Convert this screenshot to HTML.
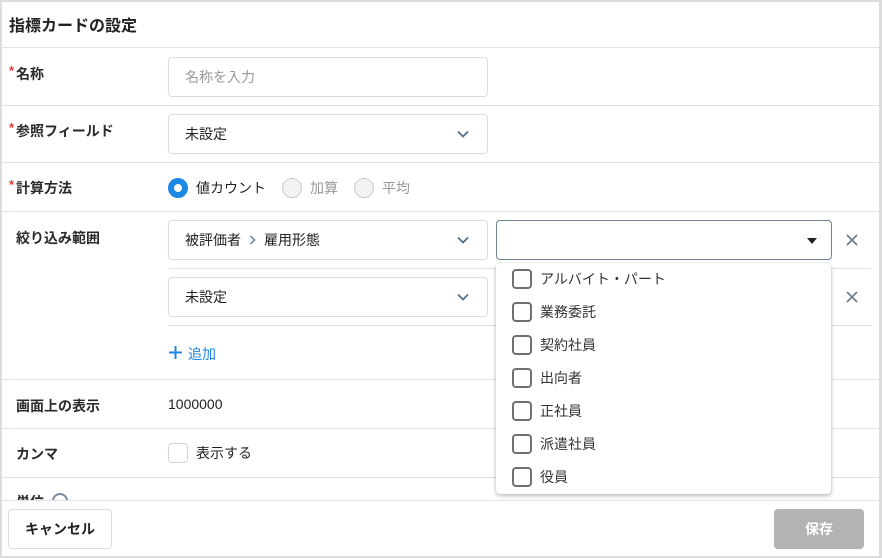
<!DOCTYPE html>
<html><head><meta charset="utf-8"><style>
*{box-sizing:border-box;margin:0;padding:0}
body{width:882px;height:558px;overflow:hidden;background:#fff;font-family:"Liberation Sans","Noto Sans CJK JP",sans-serif;color:#222;position:relative}
.frame{position:absolute;left:0;top:0;width:882px;height:558px;border:2px solid #dcdcdc;border-right-width:3px}
.a{position:absolute}
.line{position:absolute;left:2px;right:3px;height:1px;background:#dde3ea}
.lbl{position:absolute;left:16px;font-size:14px;font-weight:bold;color:#2a2a2a}
.lbl .s{color:#e53935;position:absolute;left:-7px;top:-1px;font-size:13px}
.box{position:absolute;border:1px solid #d8dee6;border-radius:4px;background:#fff;font-size:14px;color:#222;padding-left:16px;display:flex;align-items:center}
.chev{position:absolute;right:18px;top:50%;margin-top:-4px}
.cb{width:20px;height:20px;border:2px solid #707070;border-radius:4px;position:absolute;left:16px}
.item{position:absolute;left:0;right:0;height:33px;font-size:14px;color:#333}
.item span{position:absolute;left:44px;top:6px}
</style></head><body>
<div class="frame"></div>
<div class="a" style="left:9px;top:12px;font-size:16px;font-weight:bold;color:#222">指標カードの設定</div>
<div class="line" style="top:47px"></div>

<div class="lbl" style="top:64px"><span class="s">*</span>名称</div>
<div class="box" style="left:168px;top:57px;width:320px;height:40px;color:#999">名称を入力</div>
<div class="line" style="top:105px"></div>

<div class="lbl" style="top:121px"><span class="s">*</span>参照フィールド</div>
<div class="box" style="left:168px;top:114px;width:320px;height:40px">未設定<svg class="chev" width="12" height="8" viewBox="0 0 12 8"><path d="M1 1.5l5 5 5-5" fill="none" stroke="#5a6c82" stroke-width="1.8"/></svg></div>
<div class="line" style="top:162px"></div>

<div class="lbl" style="top:178px"><span class="s">*</span>計算方法</div>
<div class="a" style="left:168px;top:178px;width:20px;height:20px;border-radius:50%;border:6px solid #1e88e5;background:#fff"></div>
<div class="a" style="left:196px;top:178px;font-size:14px">値カウント</div>
<div class="a" style="left:282px;top:178px;width:20px;height:20px;border-radius:50%;border:1.5px solid #ccc;background:#f2f2f2"></div>
<div class="a" style="left:310px;top:178px;font-size:14px;color:#999">加算</div>
<div class="a" style="left:354px;top:178px;width:20px;height:20px;border-radius:50%;border:1.5px solid #ccc;background:#f2f2f2"></div>
<div class="a" style="left:382px;top:178px;font-size:14px;color:#999">平均</div>
<div class="line" style="top:211px"></div>

<div class="lbl" style="top:228px">絞り込み範囲</div>
<div class="box" style="left:168px;top:220px;width:320px;height:40px">被評価者<svg style="margin:0 8px" width="7" height="10" viewBox="0 0 7 10"><path d="M1.5 1l4 4-4 4" fill="none" stroke="#6b7a8c" stroke-width="1.5"/></svg>雇用形態<svg class="chev" width="12" height="8" viewBox="0 0 12 8"><path d="M1 1.5l5 5 5-5" fill="none" stroke="#5a6c82" stroke-width="1.8"/></svg></div>
<div class="box" style="left:496px;top:220px;width:336px;height:40px;border-color:#6e8197"><svg class="a" style="right:14px;top:17px" width="10" height="6"><path d="M0 0h10L5 6z" fill="#222"/></svg></div>
<svg class="a" style="left:846px;top:234px" width="12" height="12"><path d="M1 1l10 10M11 1L1 11" stroke="#6b7a8c" stroke-width="1.6"/></svg>
<div class="a" style="left:168px;top:268px;right:10px;height:1px;background:#dde3ea"></div>
<div class="box" style="left:168px;top:277px;width:320px;height:40px">未設定<svg class="chev" width="12" height="8" viewBox="0 0 12 8"><path d="M1 1.5l5 5 5-5" fill="none" stroke="#5a6c82" stroke-width="1.8"/></svg></div>
<svg class="a" style="left:846px;top:291px" width="12" height="12"><path d="M1 1l10 10M11 1L1 11" stroke="#6b7a8c" stroke-width="1.6"/></svg>
<div class="a" style="left:168px;top:325px;right:10px;height:1px;background:#dde3ea"></div>
<svg class="a" style="left:169px;top:346px" width="13" height="13"><path d="M6.5 0v13M0 6.5h13" stroke="#1e88e5" stroke-width="2"/></svg>
<div class="a" style="left:188px;top:344px;font-size:14px;color:#1e88e5">追加</div>
<div class="line" style="top:379px"></div>

<div class="lbl" style="top:396px">画面上の表示</div>
<div class="a" style="left:168px;top:396px;font-size:14px">1000000</div>
<div class="line" style="top:428px"></div>

<div class="lbl" style="top:444px">カンマ</div>
<div class="a" style="left:168px;top:443px;width:20px;height:20px;border:1.5px solid #d0d6de;border-radius:4px"></div>
<div class="a" style="left:196px;top:443px;font-size:14px">表示する</div>
<div class="line" style="top:477px"></div>
<div class="lbl" style="top:492px;height:8px;overflow:hidden">単位</div>
<div class="a" style="left:52px;top:493px;width:16px;height:16px;border-radius:50%;border:2px solid #7a8ca3"></div>

<div class="a" style="left:2px;right:3px;top:500px;height:56px;background:#fff;border-top:1px solid #dde3ea"></div>
<div class="a" style="left:8px;top:509px;width:104px;height:40px;border:1px solid #d8dee6;border-radius:4px;font-size:14px;font-weight:bold;display:flex;align-items:center;justify-content:center">キャンセル</div>
<div class="a" style="left:774px;top:509px;width:90px;height:40px;background:#b3b3b3;border-radius:4px;font-size:14px;font-weight:bold;color:#fff;display:flex;align-items:center;justify-content:center">保存</div>

<div class="a" style="left:496px;top:263px;width:335px;height:231px;background:#fff;border-radius:4px;box-shadow:0 2px 5px rgba(0,0,0,.25),0 0 1px rgba(0,0,0,.2)">
<div class="item" style="top:0"><div class="cb" style="top:6px"></div><span>アルバイト・パート</span></div>
<div class="item" style="top:33px"><div class="cb" style="top:6px"></div><span>業務委託</span></div>
<div class="item" style="top:66px"><div class="cb" style="top:6px"></div><span>契約社員</span></div>
<div class="item" style="top:99px"><div class="cb" style="top:6px"></div><span>出向者</span></div>
<div class="item" style="top:132px"><div class="cb" style="top:6px"></div><span>正社員</span></div>
<div class="item" style="top:165px"><div class="cb" style="top:6px"></div><span>派遣社員</span></div>
<div class="item" style="top:198px"><div class="cb" style="top:6px"></div><span>役員</span></div>
</div>
</body></html>
